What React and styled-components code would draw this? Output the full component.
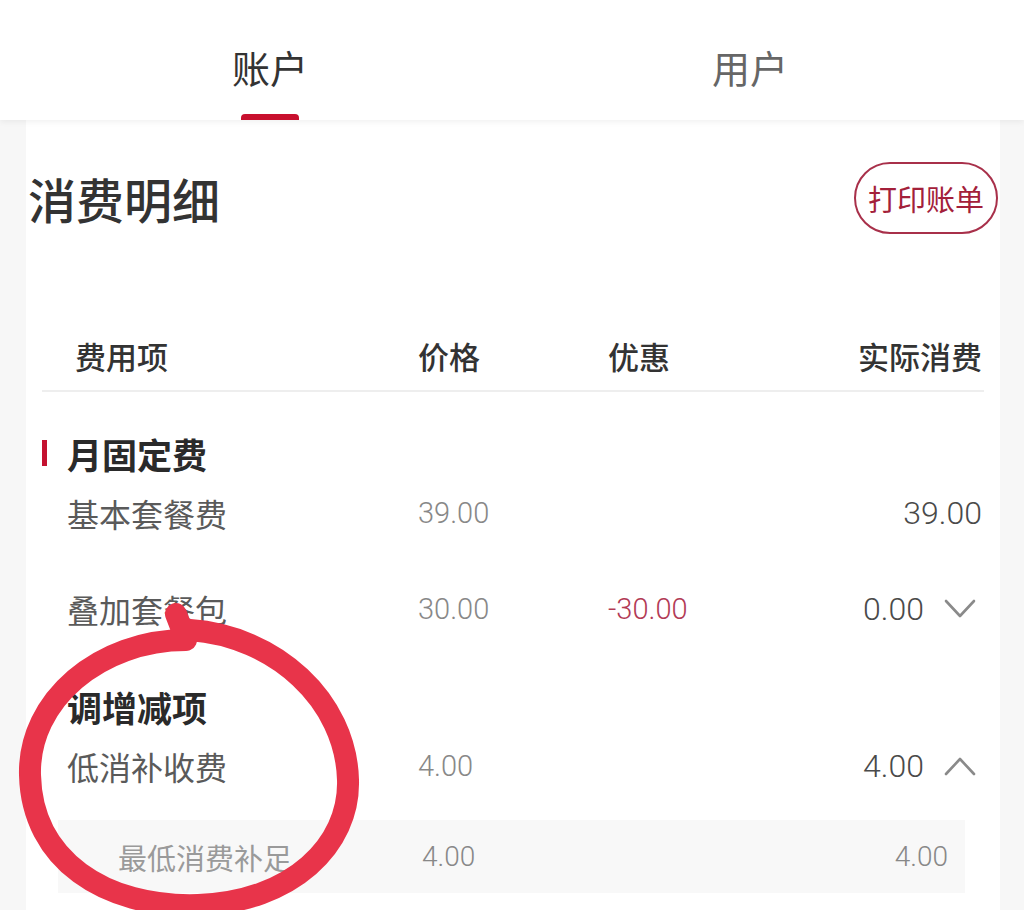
import React from 'react';
import styled, { createGlobalStyle } from 'styled-components';

const GlobalStyle = createGlobalStyle`
  html, body {
    margin: 0;
    padding: 0;
    background: #f7f7f7;
  }
  body {
    font-family: "Noto Sans CJK SC", "Noto Sans", sans-serif;
    color: #333;
  }
`;

const Page = styled.div`
  position: relative;
  width: 1024px;
  height: 910px;
  overflow: hidden;
  background: #f7f7f7;
`;

// Top tab bar
const TabBar = styled.div`
  position: relative;
  z-index: 1;
  display: grid;
  grid-template-columns: 480px 480px;
  padding: 0 34px 0 30px;
  height: 120px;
  background: #fff;
  box-shadow: 0 2px 6px rgba(0, 0, 0, 0.06);
`;

const Tab = styled.div`
  display: flex;
  flex-direction: column;
  align-items: center;
  padding-top: 44px;
  font-size: 38px;
  line-height: 46px;
  color: ${p => (p.$active ? '#333' : '#666')};
`;

const Indicator = styled.div`
  margin-top: 24px;
  width: 58px;
  height: 6px;
  border-radius: 4px 4px 0 0;
  background: #c8102e;
  visibility: ${p => (p.$show ? 'visible' : 'hidden')};
`;

// Main card
const Card = styled.div`
  margin: 0 24px 0 26px;
  height: 800px;
  background: #fff;
`;

const TitleRow = styled.div`
  display: flex;
  justify-content: space-between;
  align-items: center;
  padding: 42px 2px 0 2px;
  height: 72px;
`;

const Title = styled.h1`
  margin: 0;
  font-size: 48px;
  font-weight: 500;
  line-height: 60px;
  color: #333;
`;

const PrintButton = styled.button`
  box-sizing: border-box;
  height: 72px;
  padding: 0 12px;
  border: 2px solid #a8304a;
  border-radius: 36px;
  background: #fff;
  font-family: inherit;
  font-size: 29px;
  line-height: 36px;
  color: #a3203a;
`;

const Inner = styled.div`
  padding: 0 16px;
`;

const columns = `376px 190px 1fr auto`;

const HeaderRow = styled.div`
  display: grid;
  grid-template-columns: ${columns};
  align-items: center;
  margin-top: 86px;
  height: 70px;
  border-bottom: 2px solid #eeeeee;
  font-size: 31px;
  font-weight: 500;
  color: #333;
`;

const HeadCell = styled.div`
  padding-left: ${p => p.$pad || 0}px;
  text-align: ${p => (p.$right ? 'right' : 'left')};
  padding-right: ${p => (p.$right ? 2 : 0)}px;
`;

const Section = styled.div`
  margin-top: 37px;
`;

const SectionTitle = styled.div`
  display: flex;
  align-items: center;
  gap: 20px;
  height: 48px;
  font-size: 35px;
  font-weight: 700;
  color: #2a2a2a;
`;

const Mark = styled.span`
  width: 5px;
  height: 26px;
  background: ${p => (p.$show ? '#c41230' : 'transparent')};
`;

const Row = styled.div`
  display: grid;
  grid-template-columns: ${columns};
  align-items: center;
  height: 72px;
  & + & {
    margin-top: 24px;
  }
`;

const Name = styled.div`
  padding-left: 25px;
  font-size: 32px;
  color: #5a5a5a;
`;

const Num = styled.div`
  font-family: Roboto, "Noto Sans", sans-serif;
  font-weight: 300;
  font-size: 29px;
  color: ${p => p.$color || '#888'};
`;

const Actual = styled.div`
  display: flex;
  align-items: center;
  justify-content: flex-end;
  font-family: Roboto, "Noto Sans", sans-serif;
  font-weight: 300;
  font-size: 32px;
  color: #4a4a4a;
  padding-right: 2px;
`;

const ChevronBox = styled.span`
  display: flex;
  margin-left: 20px;
  margin-right: 6px;
`;

const SubRow = styled.div`
  display: grid;
  grid-template-columns: 304px 190px 1fr auto;
  align-items: center;
  margin: 18px 19px 0 16px;
  padding: 0 17px 0 60px;
  height: 73px;
  background: #f8f8f8;
`;

const SubName = styled.div`
  font-size: 29px;
  color: #9a9a9a;
`;

const SubNum = styled.div`
  font-family: Roboto, "Noto Sans", sans-serif;
  font-weight: 300;
  font-size: 28px;
  color: #888;
  text-align: ${p => (p.$right ? 'right' : 'left')};
`;

const Annotation = styled.svg`
  position: absolute;
  left: 0;
  top: 0;
  z-index: 2;
  pointer-events: none;
`;

const Chevron = ({ up }) => (
  <svg width="32" height="20" viewBox="0 0 32 20">
    <polyline
      points={up ? '2,18 16,3 30,18' : '2,2 16,17 30,2'}
      fill="none"
      stroke="#8a8a8a"
      strokeWidth="2.6"
      strokeLinecap="round"
      strokeLinejoin="round"
    />
  </svg>
);

const sections = [
  {
    title: '月固定费',
    mark: true,
    rows: [
      { name: '基本套餐费', price: '39.00', actual: '39.00' },
      { name: '叠加套餐包', price: '30.00', discount: '-30.00', actual: '0.00', chevron: 'down' },
    ],
  },
  {
    title: '调增减项',
    mark: false,
    rows: [
      {
        name: '低消补收费',
        price: '4.00',
        actual: '4.00',
        chevron: 'up',
        sub: { name: '最低消费补足', price: '4.00', actual: '4.00' },
      },
    ],
  },
];

export default function App() {
  return (
    <Page>
      <GlobalStyle />
      <TabBar>
        <Tab $active>
          账户
          <Indicator $show />
        </Tab>
        <Tab>
          用户
          <Indicator />
        </Tab>
      </TabBar>

      <Card>
        <TitleRow>
          <Title>消费明细</Title>
          <PrintButton>打印账单</PrintButton>
        </TitleRow>

        <Inner>
          <HeaderRow>
            <HeadCell $pad={33}>费用项</HeadCell>
            <HeadCell>价格</HeadCell>
            <HeadCell>优惠</HeadCell>
            <HeadCell $right>实际消费</HeadCell>
          </HeaderRow>

          {sections.map(section => (
            <Section key={section.title}>
              <SectionTitle>
                <Mark $show={section.mark} />
                {section.title}
              </SectionTitle>
              {section.rows.map(row => (
                <React.Fragment key={row.name}>
                  <Row>
                    <Name>{row.name}</Name>
                    <Num>{row.price}</Num>
                    <Num $color="#b23a55">{row.discount}</Num>
                    <Actual>
                      {row.actual}
                      {row.chevron && (
                        <ChevronBox>
                          <Chevron up={row.chevron === 'up'} />
                        </ChevronBox>
                      )}
                    </Actual>
                  </Row>
                  {row.sub && (
                    <SubRow>
                      <SubName>{row.sub.name}</SubName>
                      <SubNum>{row.sub.price}</SubNum>
                      <span />
                      <SubNum $right>{row.sub.actual}</SubNum>
                    </SubRow>
                  )}
                </React.Fragment>
              ))}
            </Section>
          ))}
        </Inner>
      </Card>

      {/* hand-drawn red circle over the screenshot */}
      <Annotation width="1024" height="910" viewBox="0 0 1024 910">
        <path
          d="M 176 614 L 186 640 C 100 640, 28 700, 30 775 C 32 860, 105 908, 198 905 C 292 902, 350 845, 348 780 C 346 700, 275 636, 190 630"
          fill="none"
          stroke="#e8344a"
          strokeWidth="22"
          strokeLinecap="round"
          strokeLinejoin="round"
        />
      </Annotation>
    </Page>
  );
}
